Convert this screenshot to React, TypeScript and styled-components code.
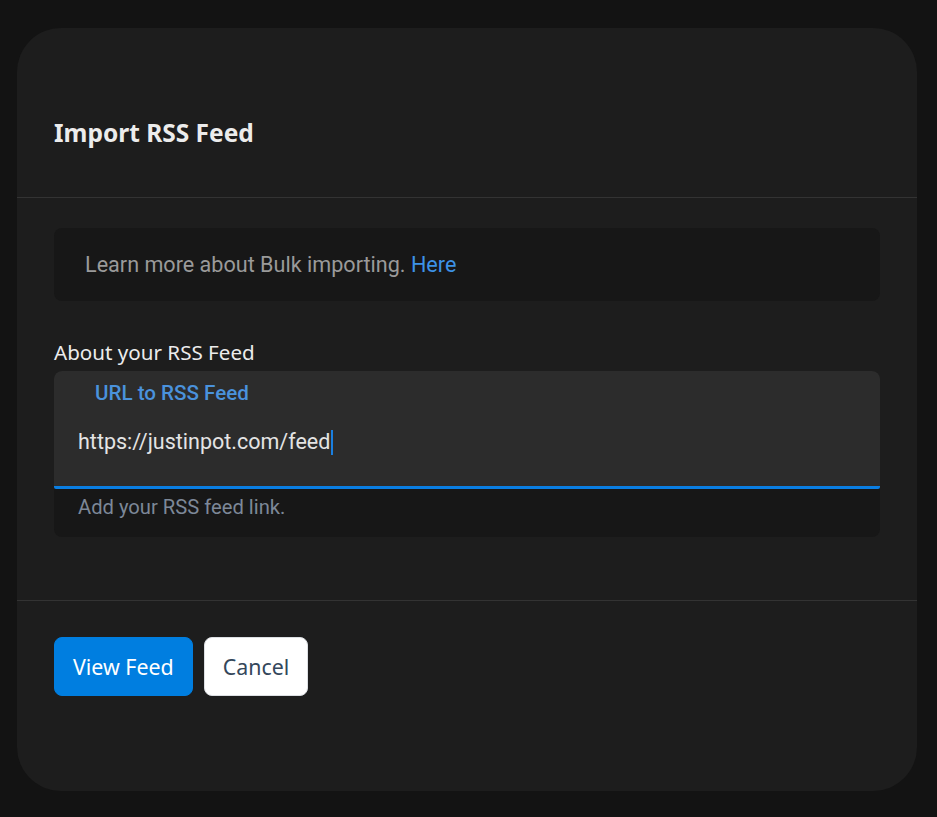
import React, { FC } from 'react';
import styled, { createGlobalStyle } from 'styled-components';

const GlobalStyle = createGlobalStyle`
	html, body {
		margin: 0;
		padding: 0;
		background: #131313;
	}
	body {
		font-family: 'Noto Sans', 'Open Sans', sans-serif;
	}
`;

const App: FC = () => {
	return (
		<>
			<GlobalStyle />
			<Page>
				<Card>
					<Header>
						<Title>Import RSS Feed</Title>
					</Header>
					<Body>
						<Notice>
							Learn more about Bulk importing. <NoticeLink href="#">Here</NoticeLink>
						</Notice>
						<Section>
							<SectionLabel>About your RSS Feed</SectionLabel>
							<Field>
								<FieldBox>
									<FieldLabel>URL to RSS Feed</FieldLabel>
									<FieldValue>
										https://justinpot.com/feed
										<Caret />
									</FieldValue>
								</FieldBox>
								<FieldHelp>Add your RSS feed link.</FieldHelp>
							</Field>
						</Section>
					</Body>
					<Footer>
						<Button variant="primary">View Feed</Button>
						<Button variant="secondary">Cancel</Button>
					</Footer>
				</Card>
			</Page>
		</>
	);
};

const Page = styled.div`
	min-height: 817px;
	padding: 28px 20px 26px 17px;
	box-sizing: border-box;
`;

const Card = styled.div`
	width: 900px;
	height: 763px;
	background: #1d1d1d;
	border-radius: 44px;
	display: flex;
	flex-direction: column;
`;

const Header = styled.div`
	height: 170px;
	padding: 40px 37px 0;
	display: flex;
	align-items: center;
	box-sizing: border-box;
	border-bottom: 1px solid #333333;
`;

const Title = styled.h2`
	margin: 0;
	font-size: 24.5px;
	font-weight: 700;
	color: #ececec;
`;

const Body = styled.div`
	padding: 30px 37px 0;
	height: 403px;
	box-sizing: border-box;
	border-bottom: 1px solid #333333;
`;

const Notice = styled.div`
	height: 73px;
	background: #171717;
	border-radius: 8px;
	display: flex;
	align-items: center;
	padding: 0 31px;
	font-family: Roboto, sans-serif;
	font-size: 21.6px;
	color: #9a9a9a;
	white-space: pre;
`;

const NoticeLink = styled.a`
	color: #3d92e6;
	text-decoration: none;
`;

const Section = styled.div`
	margin-top: 38px;
`;

const SectionLabel = styled.div`
	font-size: 20.6px;
	color: #ececec;
	line-height: 26px;
	margin-bottom: 6px;
`;

const Field = styled.div`
	background: #171717;
	border-radius: 8px;
	font-family: Roboto, sans-serif;
`;

const FieldBox = styled.div`
	height: 118px;
	background: #2c2c2c;
	border-radius: 8px 8px 2px 2px;
	border-bottom: 3px solid #0a7ee2;
	box-sizing: border-box;
	padding: 9px 24px 0;
`;

const FieldLabel = styled.div`
	font-size: 20.6px;
	font-weight: 500;
	color: #4a92dc;
	padding-left: 17px;
	line-height: 26px;
`;

const FieldValue = styled.div`
	margin-top: 23px;
	font-size: 21.5px;
	color: #e4e4e4;
	line-height: 26px;
	display: flex;
	align-items: center;
`;

const Caret = styled.span`
	display: inline-block;
	width: 2px;
	height: 25px;
	background: #1a7fe0;
	margin-left: 1px;
`;

const FieldHelp = styled.div`
	height: 48px;
	padding: 5px 24px 0;
	box-sizing: border-box;
	font-size: 20.2px;
	color: #7d8898;
	line-height: 26px;
`;

const Footer = styled.div`
	display: flex;
	gap: 11px;
	padding: 36px 37px 0;
`;

const Button = styled.button<{ variant: 'primary' | 'secondary' }>`
	height: 59px;
	padding: 0 18px;
	border-radius: 8px;
	font-family: 'Noto Sans', 'Open Sans', sans-serif;
	font-size: 21.4px;
	cursor: pointer;
	border: 1px solid ${(p) => (p.variant === 'primary' ? '#007ee0' : '#dcdfe3')};
	background: ${(p) => (p.variant === 'primary' ? '#007ee0' : '#ffffff')};
	color: ${(p) => (p.variant === 'primary' ? '#ffffff' : '#34475b')};
`;

export default App;
